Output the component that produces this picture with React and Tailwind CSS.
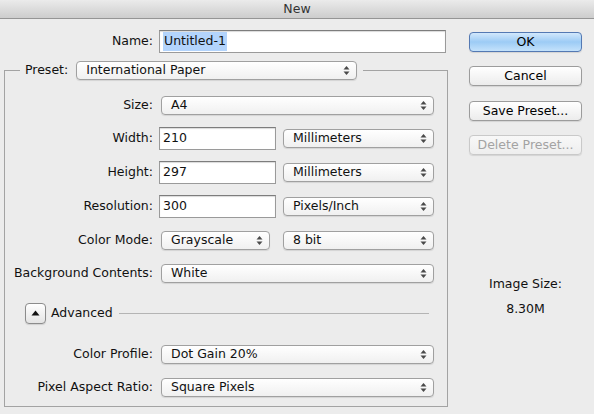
import React from 'react';

const font = { fontFamily: '"DejaVu Sans", "Lucida Grande", sans-serif' };

const Arrows = () => (
    <svg width="7" height="11" viewBox="0 0 7 11" className="mr-[6px] shrink-0">
        <path d="M3.5 1 L6.5 4.5 L0.5 4.5 Z" fill="#4a4a4a" />
        <path d="M0.5 6.5 L6.5 6.5 L3.5 10 Z" fill="#4a4a4a" />
    </svg>
);

const Select = ({ value, className = '' }) => (
    <div className={`flex items-center h-[19px] rounded-[4px] border border-[#a0a0a0] bg-linear-to-b from-white to-[#f0f0f0] shadow-[0_1px_1px_rgba(0,0,0,0.10)] pl-[9px] ${className}`}>
        <span className="flex-1 leading-none">{value}</span>
        <Arrows />
    </div>
);

const Input = ({ value, className = '' }) => (
    <div className={`flex items-center h-[23px] bg-white border border-[#9a9a9a] border-t-[#7d7d7d] shadow-[inset_0_1px_1px_rgba(0,0,0,0.15)] pl-[3px] ${className}`}>
        {value}
    </div>
);

const Label = ({ children, className = 'w-[148px]' }) => (
    <span className={`text-right shrink-0 ${className}`}>{children}</span>
);

const Row = ({ h, children }) => (
    <div className={`flex items-center ${h}`}>{children}</div>
);

const Button = ({ children, variant = 'default' }) => {
    const styles = {
        primary: 'border-[#5479b3] bg-linear-to-b from-[#d2e8fc] via-[#9ccbf5] to-[#c4e2fb] text-black',
        default: 'border-[#9c9c9c] bg-linear-to-b from-white to-[#ececec] text-black',
        disabled: 'border-[#c9c9c9] bg-linear-to-b from-[#f8f8f8] to-[#eeeeee] text-[#a3a3a3]',
    };
    return (
        <div className={`flex items-center justify-center h-[20px] rounded-[4px] border shadow-[0_1px_1px_rgba(0,0,0,0.10)] ${styles[variant]}`}>
            {children}
        </div>
    );
};

export default function App() {
    return (
        <div style={font} className="w-[594px] h-[414px] bg-[#ececec] text-[12.5px] text-[#111] overflow-hidden">
            {/* title bar */}
            <div className="h-[19px] flex items-center justify-center bg-linear-to-b from-[#ebebeb] to-[#cdcdcd] border-b border-[#959595] text-[#333]">
                New
            </div>

            <div className="flex">
                {/* left column */}
                <div className="w-[452px] pl-[4px]">
                    <div className="flex items-center h-[23px] mt-[11px]">
                        <Label className="w-[149px]">Name:</Label>
                        <Input className="ml-[6px] w-[287px]" value={<span className="bg-[#b3d4fc] px-[1px]">Untitled-1</span>} />
                    </div>

                    <fieldset className="mt-[8px] w-[444px] border border-[#a3a3a3] px-0 pb-[3px] pt-[10px] m-0 min-w-0">
                        <legend className="ml-[15px] pl-[5px] pr-[6px] flex items-center">
                            <span>Preset:</span>
                            <Select value="International Paper" className="ml-[8px] w-[281px]" />
                        </legend>

                        <Row h="h-[31px]">
                            <Label>Size:</Label>
                            <Select value="A4" className="ml-[8px] w-[273px]" />
                        </Row>
                        <Row h="h-[34px]">
                            <Label>Width:</Label>
                            <Input value="210" className="ml-[6px] w-[117px]" />
                            <Select value="Millimeters" className="ml-[7px] w-[151px]" />
                        </Row>
                        <Row h="h-[34px]">
                            <Label>Height:</Label>
                            <Input value="297" className="ml-[6px] w-[117px]" />
                            <Select value="Millimeters" className="ml-[7px] w-[151px]" />
                        </Row>
                        <Row h="h-[34px]">
                            <Label>Resolution:</Label>
                            <Input value="300" className="ml-[6px] w-[117px]" />
                            <Select value="Pixels/Inch" className="ml-[7px] w-[151px]" />
                        </Row>
                        <Row h="h-[34px]">
                            <Label>Color Mode:</Label>
                            <Select value="Grayscale" className="ml-[8px] w-[109px]" />
                            <Select value="8 bit" className="ml-[13px] w-[151px]" />
                        </Row>
                        <Row h="h-[32px]">
                            <Label>Background Contents:</Label>
                            <Select value="White" className="ml-[8px] w-[273px]" />
                        </Row>

                        {/* Advanced */}
                        <div className="flex items-center h-[48px] pl-[20px] pr-[18px]">
                            <div className="w-[21px] h-[21px] rounded-[4px] border border-[#8c8c8c] bg-linear-to-b from-white to-[#e4e4e4] shadow-[0_1px_1px_rgba(0,0,0,0.12)] flex items-center justify-center">
                                <svg width="9" height="6" viewBox="0 0 9 6">
                                    <path d="M4.5 0.5 L8.5 5.5 L0.5 5.5 Z" fill="#111" />
                                </svg>
                            </div>
                            <span className="ml-[5px]">Advanced</span>
                            <div className="flex-1 ml-[6px] h-px bg-[#b4b4b4]" />
                        </div>

                        <Row h="h-[34px]">
                            <Label>Color Profile:</Label>
                            <Select value="Dot Gain 20%" className="ml-[8px] w-[273px]" />
                        </Row>
                        <Row h="h-[32px]">
                            <Label>Pixel Aspect Ratio:</Label>
                            <Select value="Square Pixels" className="ml-[8px] w-[273px]" />
                        </Row>
                    </fieldset>
                </div>

                {/* right column */}
                <div className="ml-[17px] w-[113px] pt-[13px] flex flex-col">
                    <Button variant="primary">OK</Button>
                    <div className="mt-[14px]"><Button>Cancel</Button></div>
                    <div className="mt-[15px]"><Button>Save Preset...</Button></div>
                    <div className="mt-[14px]"><Button variant="disabled">Delete Preset...</Button></div>
                    <div className="mt-[120px] text-center">Image Size:</div>
                    <div className="mt-[6px] text-center">8.30M</div>
                </div>
            </div>
        </div>
    );
}
